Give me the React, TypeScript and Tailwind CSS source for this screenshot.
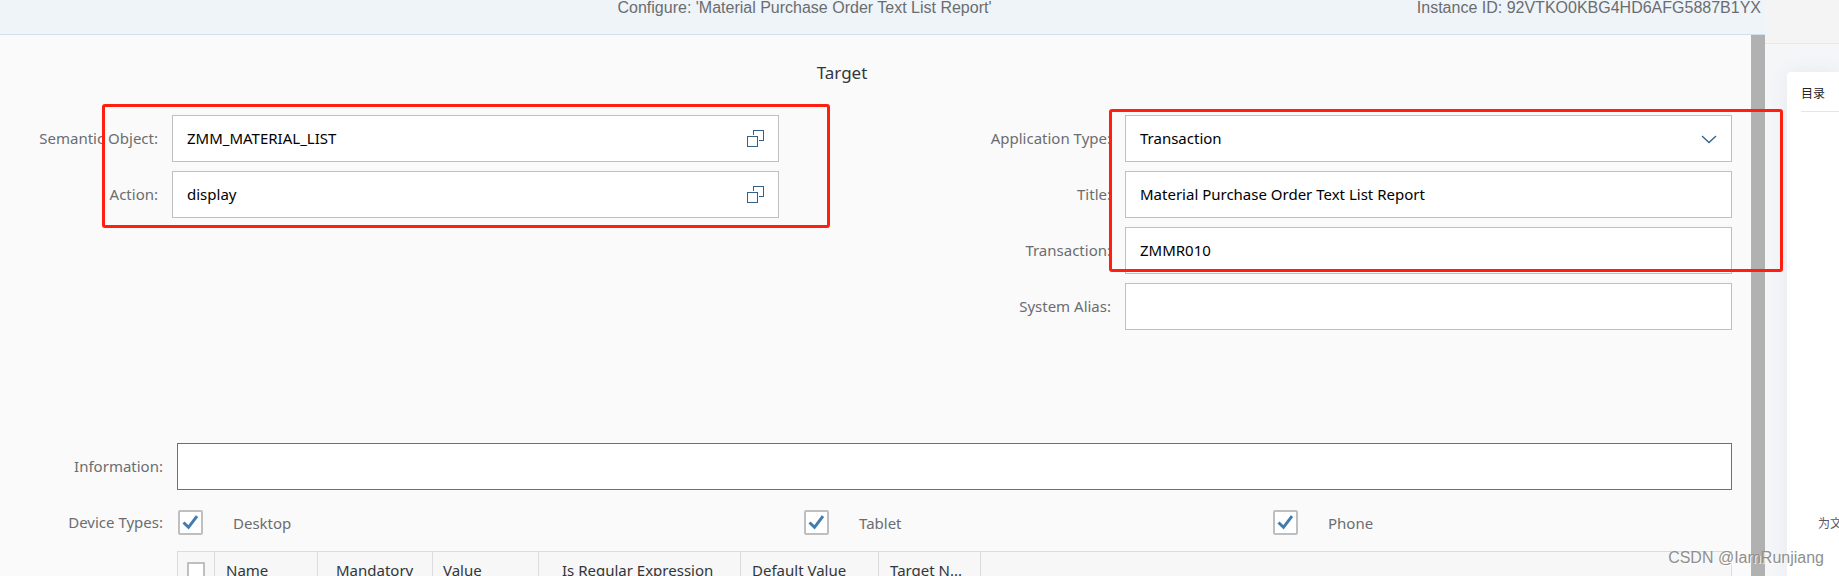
import type { ReactNode } from "react";

const inputClass =
  "h-[47px] w-full min-w-0 appearance-none rounded-none border border-[#bfbfbf] bg-white px-[14px] text-[15px] text-black outline-none";

const textInputClass = `${inputClass} pb-[2px]`;

function Field({
  id,
  label,
  labelClass,
  children,
}: {
  id: string;
  label: string;
  labelClass: string;
  children: ReactNode;
}) {
  return (
    <div className="flex items-center gap-[14px]">
      <label htmlFor={id} className={`shrink-0 text-right text-[15px] text-[#6a6d70] ${labelClass}`}>
        {label}
      </label>
      <div className="relative min-w-0 flex-1">{children}</div>
    </div>
  );
}

function ValueHelpButton({ label }: { label: string }) {
  return (
    <button
      type="button"
      aria-label={label}
      className="absolute inset-y-0 right-0 flex w-[46px] items-center justify-center text-[#346187]"
    >
      <svg width="18" height="18" viewBox="0 0 18 18" fill="none" stroke="currentColor" shapeRendering="crispEdges">
        <rect x="0.5" y="6.5" width="10" height="10" />
        <path d="M6.5 5V0.5H16.5V10.5H12" />
      </svg>
    </button>
  );
}

function DeviceOption({ label }: { label: string }) {
  return (
    <label className="flex items-center gap-[30px] text-[15px] text-[#6a6d70]">
      <span className="grid size-[25px] shrink-0 place-items-center">
        <input
          type="checkbox"
          defaultChecked
          className="col-start-1 row-start-1 size-[25px] appearance-none rounded-[2px] border-2 border-[#bfbfbf] bg-white"
        />
        <svg
          className="pointer-events-none col-start-1 row-start-1"
          width="17"
          height="15"
          viewBox="0 0 17 15"
          fill="none"
          stroke="#427cac"
          strokeWidth="3"
        >
          <path d="M1.5 7.5L6.5 12.3L15 1.2" />
        </svg>
      </span>
      <span className="pt-[2px]">{label}</span>
    </label>
  );
}

const columns = [
  { title: "Name", cell: "w-[103px] pl-[11px]" },
  { title: "Mandatory", cell: "w-[115px] pl-[18px]" },
  { title: "Value", cell: "w-[106px] pl-[10px]" },
  { title: "Is Regular Expression", cell: "w-[202px] pl-[23px]" },
  { title: "Default Value", cell: "w-[138px] pl-[11px]" },
  { title: "Target N...", cell: "w-[102px] pl-[11px]" },
];

export default function App() {
  return (
    <div className="relative flex h-screen overflow-hidden bg-[#fafafa] font-['Noto_Sans',sans-serif]">
      <main className="relative z-10 flex min-w-0 flex-1 flex-col">
        <header className="grid h-[35px] shrink-0 grid-cols-[1fr_auto_1fr] items-start border-b border-[#cfe0ee] bg-[#eff4f9] pr-1 font-['Liberation_Sans',Arial,sans-serif] text-[16px] leading-[16px] text-[#6a6d70]">
          <h1 className="col-start-2 pr-[152px]">Configure: 'Material Purchase Order Text List Report'</h1>
          <p className="text-right">Instance ID: 92VTKO0KBG4HD6AFG5887B1YX</p>
        </header>

        <div className="flex min-h-0 flex-1">
          <form className="flex min-w-0 flex-1 flex-col pr-[19px]">
            <h2 className="pt-[24px] pr-[48px] text-center text-[17px] leading-[28px] text-[#32363a]">Target</h2>

            <div className="mt-[28px] flex">
              <section className="relative flex flex-1 flex-col gap-[9px]">
                <Field id="semantic" label="Semantic Object:" labelClass="w-[158px]">
                  <input id="semantic" className={textInputClass} defaultValue="ZMM_MATERIAL_LIST" />
                  <ValueHelpButton label="Choose semantic object" />
                </Field>
                <Field id="action" label="Action:" labelClass="w-[158px]">
                  <input id="action" className={textInputClass} defaultValue="display" />
                  <ValueHelpButton label="Choose action" />
                </Field>
                <div className="pointer-events-none absolute -top-[11px] -right-[51px] left-[102px] h-[124px] rounded-[3px] border-3 border-[#ff1e10]" />
              </section>

              <section className="relative flex flex-1 basis-[174px] flex-col gap-[9px]">
                <Field id="apptype" label="Application Type:" labelClass="w-[332px]">
                  <select id="apptype" className={inputClass}>
                    <option>Transaction</option>
                  </select>
                  <svg
                    className="pointer-events-none absolute top-[20px] right-[15px]"
                    width="16"
                    height="9"
                    viewBox="0 0 16 9"
                    fill="none"
                    stroke="#346187"
                    strokeWidth="1.3"
                  >
                    <path d="M1 1L8 7.5L15 1" />
                  </svg>
                </Field>
                <Field id="title" label="Title:" labelClass="w-[332px]">
                  <input id="title" className={textInputClass} defaultValue="Material Purchase Order Text List Report" />
                </Field>
                <Field id="transaction" label="Transaction:" labelClass="w-[332px]">
                  <input id="transaction" className={textInputClass} defaultValue="ZMMR010" />
                </Field>
                <Field id="alias" label="System Alias:" labelClass="w-[332px]">
                  <input id="alias" className={textInputClass} />
                </Field>
                <div className="pointer-events-none absolute -top-[6px] -right-[51px] left-[330px] h-[163px] rounded-[3px] border-3 border-[#ff1e10]" />
              </section>
            </div>

            <div className="mt-[113px]">
              <Field id="information" label="Information:" labelClass="w-[163px]">
                <input
                  id="information"
                  className="h-[47px] w-full rounded-none border border-[#427cac] bg-white px-[14px] text-[15px] text-black outline-none"
                />
              </Field>
            </div>

            <fieldset aria-labelledby="device-types" className="mt-[20px] flex items-center gap-[15px]">
              <span id="device-types" className="w-[163px] shrink-0 text-right text-[15px] text-[#6a6d70]">
                Device Types:
              </span>
              <div className="grid h-[25px] flex-1 grid-cols-[626fr_469fr_459fr] items-center">
                <DeviceOption label="Desktop" />
                <DeviceOption label="Tablet" />
                <DeviceOption label="Phone" />
              </div>
            </fieldset>

            <div className="mt-[16px] flex items-start gap-[14px]">
              <span className="w-[163px] shrink-0 pt-[18px] text-right text-[15px] leading-[22px] text-[#6a6d70]">
                Parameters:
              </span>
              <table className="min-w-0 flex-1 table-fixed border-collapse bg-[#f7f7f7] text-[15px] text-[#32363a]">
                <thead>
                  <tr className="h-[38px]">
                    <th className="w-[37px] border border-[#dcdcdc] pl-[9px] text-left">
                      <input
                        type="checkbox"
                        aria-label="Select all"
                        className="block size-[18px] appearance-none border-2 border-[#bfbfbf] bg-white"
                      />
                    </th>
                    {columns.map((column) => (
                      <th
                        key={column.title}
                        className={`border border-[#dcdcdc] text-left font-normal whitespace-nowrap ${column.cell}`}
                      >
                        {column.title}
                      </th>
                    ))}
                    <th className="border border-[#dcdcdc]" />
                  </tr>
                </thead>
              </table>
            </div>
          </form>
          <div className="w-[14px] shrink-0 bg-[#b1b1b1]" />
        </div>
      </main>

      <aside className="flex w-[74px] shrink-0 flex-col bg-[#f5f6f8] font-['Noto_Sans_CJK_SC',sans-serif] text-[12px] leading-[18px]">
        <div className="h-[44px] shrink-0 border-b border-[#e6e8ea] bg-[#f4f4f4]" />
        <div className="mt-[28px] ml-[22px] flex-1 rounded-tl-[4px] bg-white pl-[14px] whitespace-nowrap shadow-[0_0_20px_rgba(60,80,130,0.08)]">
          <h3 className="border-b border-[#e6e6e6] pt-[12px] pb-[9px] font-normal text-[#222226]">目录</h3>
          <p className="mt-[402px] pl-[17px] text-[#555666]">为文</p>
        </div>
      </aside>

      <p className="pointer-events-none absolute right-[15px] bottom-[7px] z-20 font-['Liberation_Sans',Arial,sans-serif] text-[16px] leading-[22px] text-[#8f8f8f] [text-shadow:1px_1px_0_rgba(255,255,255,0.8)]">
        CSDN @IamRunjiang
      </p>
    </div>
  );
}
